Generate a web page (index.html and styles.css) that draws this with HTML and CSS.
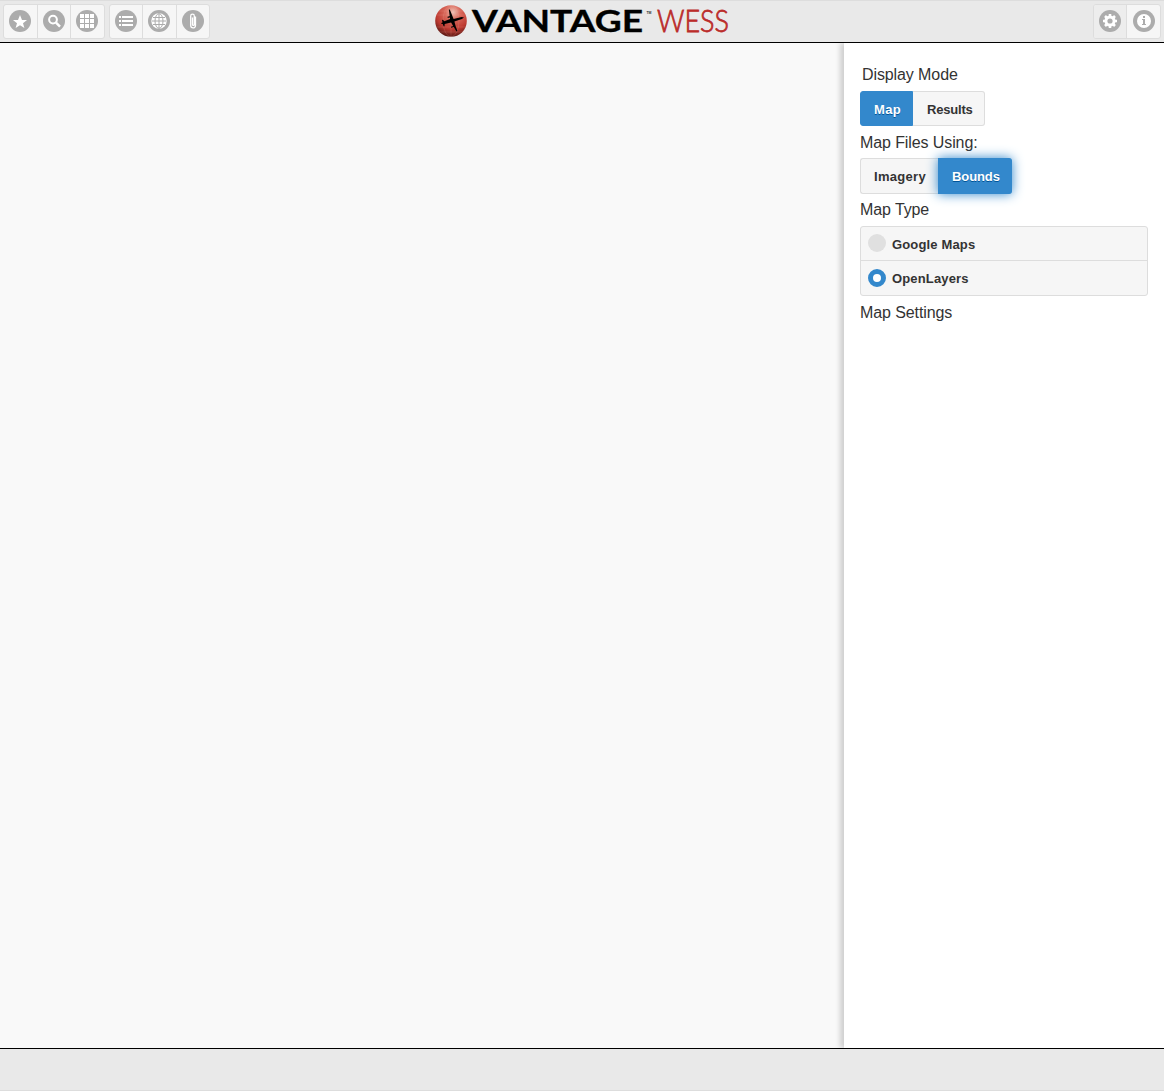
FILE: index.html
```html
<!DOCTYPE html>
<html lang="en">
<head>
<meta charset="utf-8">
<title>Vantage WESS</title>
<link rel="stylesheet" href="styles.css">
</head>
<body>
<header class="header">
  <div class="group">
    <button class="tool" aria-label="Favorites"><svg class="icon" viewBox="0 0 22 22"><circle class="disc" cx="11" cy="11" r="11"/><path d="M18 10h-5L11 5 9 10H4l4 3.200L6.600 18 11 15.200l4.400 2.800L14 13.200z"/></svg></button>
    <button class="tool" aria-label="Search"><svg class="icon" viewBox="0 0 22 22"><circle class="disc" cx="11" cy="11" r="11"/><circle class="line" cx="10" cy="9.600" r="3.900"/><path class="line thick" d="M13 12.600l4 4"/></svg></button>
    <button class="tool" aria-label="Grid"><svg class="icon" viewBox="0 0 22 22"><circle class="disc" cx="11" cy="11" r="11"/><path d="M4 4h4v4H4zM9 4h4v4H9zM14 4h4v4h-4zM4 9h4v4H4zM9 9h4v4H9zM14 9h4v4h-4zM4 14h4v4H4zM9 14h4v4H9zM14 14h4v4h-4z"/></svg></button>
  </div>
  <div class="group">
    <button class="tool" aria-label="List"><svg class="icon" viewBox="0 0 22 22"><circle class="disc" cx="11" cy="11" r="11"/><path d="M4 6h2v2H4zM7 6h11v2H7zM4 10h2v2H4zM7 10h11v2H7zM4 14h2v2H4zM7 14h11v2H7z"/></svg></button>
    <button class="tool" aria-label="Map"><svg class="icon" viewBox="0 0 22 22"><circle class="disc" cx="11" cy="11" r="11"/><circle cx="11" cy="11" r="7.700"/><path class="mesh" d="M11 3.500v15M4 11h14M5 7.500h12M5 14.500h12"/><ellipse class="mesh" cx="11" cy="11" rx="4" ry="7.300"/></svg></button>
    <button class="tool" aria-label="Attachments"><svg class="icon" viewBox="0 0 22 22"><circle class="disc" cx="11" cy="11" r="11"/><path class="clip" d="M13.500 6.500v9a2.400 2.400 0 0 1-4.800 0V6a1.800 1.800 0 0 1 3.600 0v8.500a.9.9 0 0 1-1.800 0V7.500"/></svg></button>
  </div>
  <svg class="logo" viewBox="0 0 300 36" role="img" aria-label="Vantage WESS">
    <defs>
      <radialGradient id="globe" cx=".56" cy=".22" r=".8"><stop offset="0" stop-color="#f0c4b8"/><stop offset=".3" stop-color="#d9695b"/><stop offset=".68" stop-color="#bd3a31"/><stop offset="1" stop-color="#551612"/></radialGradient>
    </defs>
    <circle cx="17" cy="18" r="15.800" fill="url(#globe)"/>
    <path class="meridian" d="M2 12h30M2 24h30M17 2v32M4 8h26M4 29h26"/><ellipse class="meridian" cx="17" cy="18" rx="8" ry="15.800"/>
    <path d="M14.800 6.600l1-.2 3.800 9.500 8-1.900 2.400.5-2.100 1.500-7.500 2.500 1.200 4.400 1.800 5.200-.9.300-5.400-8.900-6.400 1.500-.2 2.300-.8.300-1-2.700-1.400-.1-.1-.9 1.300-.5-.5-2.500.8-.2 1.500 1.500 5.800-2.100z"/>
    <path class="engines" d="M13.600 14.400l3.600-1M17 24.200l3.600-1"/>
    <text class="word" x="38" y="28.600" textLength="171" lengthAdjust="spacingAndGlyphs">VANTAGE</text>
    <text class="mark" x="212.500" y="10.500" textLength="5" lengthAdjust="spacingAndGlyphs">TM</text>
    <text class="wess" x="223" y="28.700" textLength="72" lengthAdjust="spacingAndGlyphs">WESS</text>
  </svg>
  <div class="group group-end">
    <button class="tool active" aria-label="Settings"><svg class="icon" viewBox="0 0 22 22"><circle class="disc" cx="11" cy="11" r="11"/><circle class="gear" cx="11" cy="11" r="4.100"/><path class="teeth" d="M11 4v3M11 15v3M4 11h3M15 11h3M6 6l2 2M14 14l2 2M16 6l-2 2M6 16l2-2"/></svg></button>
    <button class="tool" aria-label="Info"><svg class="icon" viewBox="0 0 22 22"><circle class="disc" cx="11" cy="11" r="11"/><circle cx="11" cy="11" r="7"/><path class="disc" d="M10 6h2v2h-2zM9 9h3v5h1v1H9v-1h1v-4H9z"/></svg></button>
  </div>
</header>
<main class="content">
  <section class="map"></section>
  <aside class="panel">
    <h2 class="label label-first">Display Mode</h2>
    <div class="choices"><button class="choice on map-choice">Map</button><button class="choice results-choice">Results</button></div>
    <h2 class="label label-files">Map Files Using:</h2>
    <div class="choices second"><button class="choice imagery-choice">Imagery</button><button class="choice on focus">Bounds</button></div>
    <h2 class="label">Map Type</h2>
    <div class="radios">
      <label class="radio"><span class="dot"></span><span class="radio-text">Google Maps</span></label>
      <label class="radio"><span class="dot selected"></span><span>OpenLayers</span></label>
    </div>
    <h2 class="label">Map Settings</h2>
  </aside>
</main>
<footer class="footer"></footer>
</body>
</html>
```
FILE: styles.css
```css
* { box-sizing: border-box; }
body {
  margin: 0;
  height: 1091px;
  display: flex;
  flex-direction: column;
  overflow: hidden;
  font-family: "Liberation Sans", Arial, sans-serif;
  color: #333;
  background: #f9f9f9;
}
button { font: inherit; color: inherit; padding: 0; margin: 0; border: 0; }
.header {
  height: 43px;
  flex: none;
  display: flex;
  align-items: flex-start;
  padding: 3px 3px 0;
  background: #e9e9e9;
  border-top: 1px solid #ddd;
  border-bottom: 1px solid #000;
}
.group {
  display: flex;
  width: 102px;
  height: 35px;
  margin-right: 4px;
  border: 1px solid #ddd;
  border-radius: 3px;
  background: #f6f6f6;
  overflow: hidden;
}
.group + .group:not(.group-end) { width: 101px; }
.tool {
  flex: none;
  width: 33px;
  display: flex;
  padding: 5px 0 0 5px;
  background: none;
  border-right: 1px solid #ddd;
}
.tool:first-child { width: 34px; }
.tool:last-child { flex: 1; border-right: 0; }
.group + .group .tool:nth-child(2) { width: 34px; }
.group + .group .tool:first-child { width: 33px; }
.tool.active { background: #ededed; }
.logo ~ .group-end { width: 68px; margin: 0 0 0 auto; }
.group-end .tool.active:first-child { width: 33px; }
.group-end .tool:last-child { padding-left: 6px; }
.icon { width: 22px; height: 22px; flex: none; fill: #fff; }
.disc { fill: #acacac; }
.line { fill: none; stroke: #fff; stroke-width: 2; }
.thick { stroke-width: 2.500; }
.mesh { fill: none; stroke: #acacac; stroke-width: 1; }
.clip { fill: none; stroke: #fff; stroke-width: 1.300; }
.gear { fill: none; stroke: #fff; stroke-width: 3; }
.teeth { stroke: #fff; stroke-width: 2.600; }
.logo { width: 300px; height: 36px; margin-left: 220px; margin-top: -1px; overflow: visible; }
.meridian { fill: none; stroke: #f3b0a2; stroke-width: .5; opacity: .35; }
.engines { fill: none; stroke: #000; stroke-width: 1.100; }
.word { font: bold 30px Lato, sans-serif; fill: #000; stroke: #000; stroke-width: .3; }
.mark { font: bold 4px "Liberation Sans", sans-serif; fill: #333; }
.wess { font: 300 31px Lato, sans-serif; fill: #bb2c2a; stroke: #bb2c2a; stroke-width: .8; }
.content { flex: 1; display: flex; min-height: 0; overflow: hidden; }
.map { flex: 1; }
.panel {
  width: 320px;
  padding: 21px 16px 0;
  background: #fff;
  box-shadow: -4px 0 5px rgba(0, 0, 0, .17);
}
.label { margin: 0; height: 27px; font-size: 16px; line-height: 21px; font-weight: 400; letter-spacing: -.1px; }
.label-first { padding-left: 2px; }
.label-files { height: 26px; }
.choices { display: flex; height: 35px; margin-bottom: 6px; }
.second { height: 36px; margin-bottom: 5px; }
.choice {
  font-size: 13px;
  font-weight: 700;
  text-align: left;
  padding: 1px 0 0 13px;
  text-shadow: 0 1px 0 #f3f3f3;
  background: #f6f6f6;
  border: 1px solid #ddd;
  border-radius: 3px 0 0 3px;
}
.choice:last-child { border-left: 0; border-radius: 0 3px 3px 0; padding-left: 14px; }
.choice.on { color: #fff; background: #38c; border-color: #38c; text-shadow: 0 1px 0 #059; }
.map-choice { width: 53px; letter-spacing: .3px; }
.results-choice { width: 72px; letter-spacing: -.2px; }
.imagery-choice { width: 78px; border-right: 0; letter-spacing: .3px; }
.focus { width: 74px; box-shadow: 0 0 12px #38c; letter-spacing: -.1px; }
.radios { height: 70px; margin-bottom: 6px; border: 1px solid #ddd; border-radius: 3px; background: #f6f6f6; }
.radio {
  display: flex;
  align-items: center;
  height: 33px;
  padding-left: 7px;
  gap: 6px;
  font-size: 13px;
  font-weight: 700;
  letter-spacing: .15px;
  text-shadow: 0 1px 0 #f3f3f3;
}
.radio-text { padding-top: 1px; }
.radio + .radio { height: 35px; border-top: 1px solid #ddd; }
.dot { width: 18px; height: 18px; margin-bottom: 1px; border-radius: 50%; background: #e0e0e0; }
.dot.selected { margin-bottom: 0; border: 5px solid #38c; background: #fff; }
.footer { height: 43px; flex: none; background: #e9e9e9; border-top: 1px solid #000; border-bottom: 1px solid #ddd; }
```
